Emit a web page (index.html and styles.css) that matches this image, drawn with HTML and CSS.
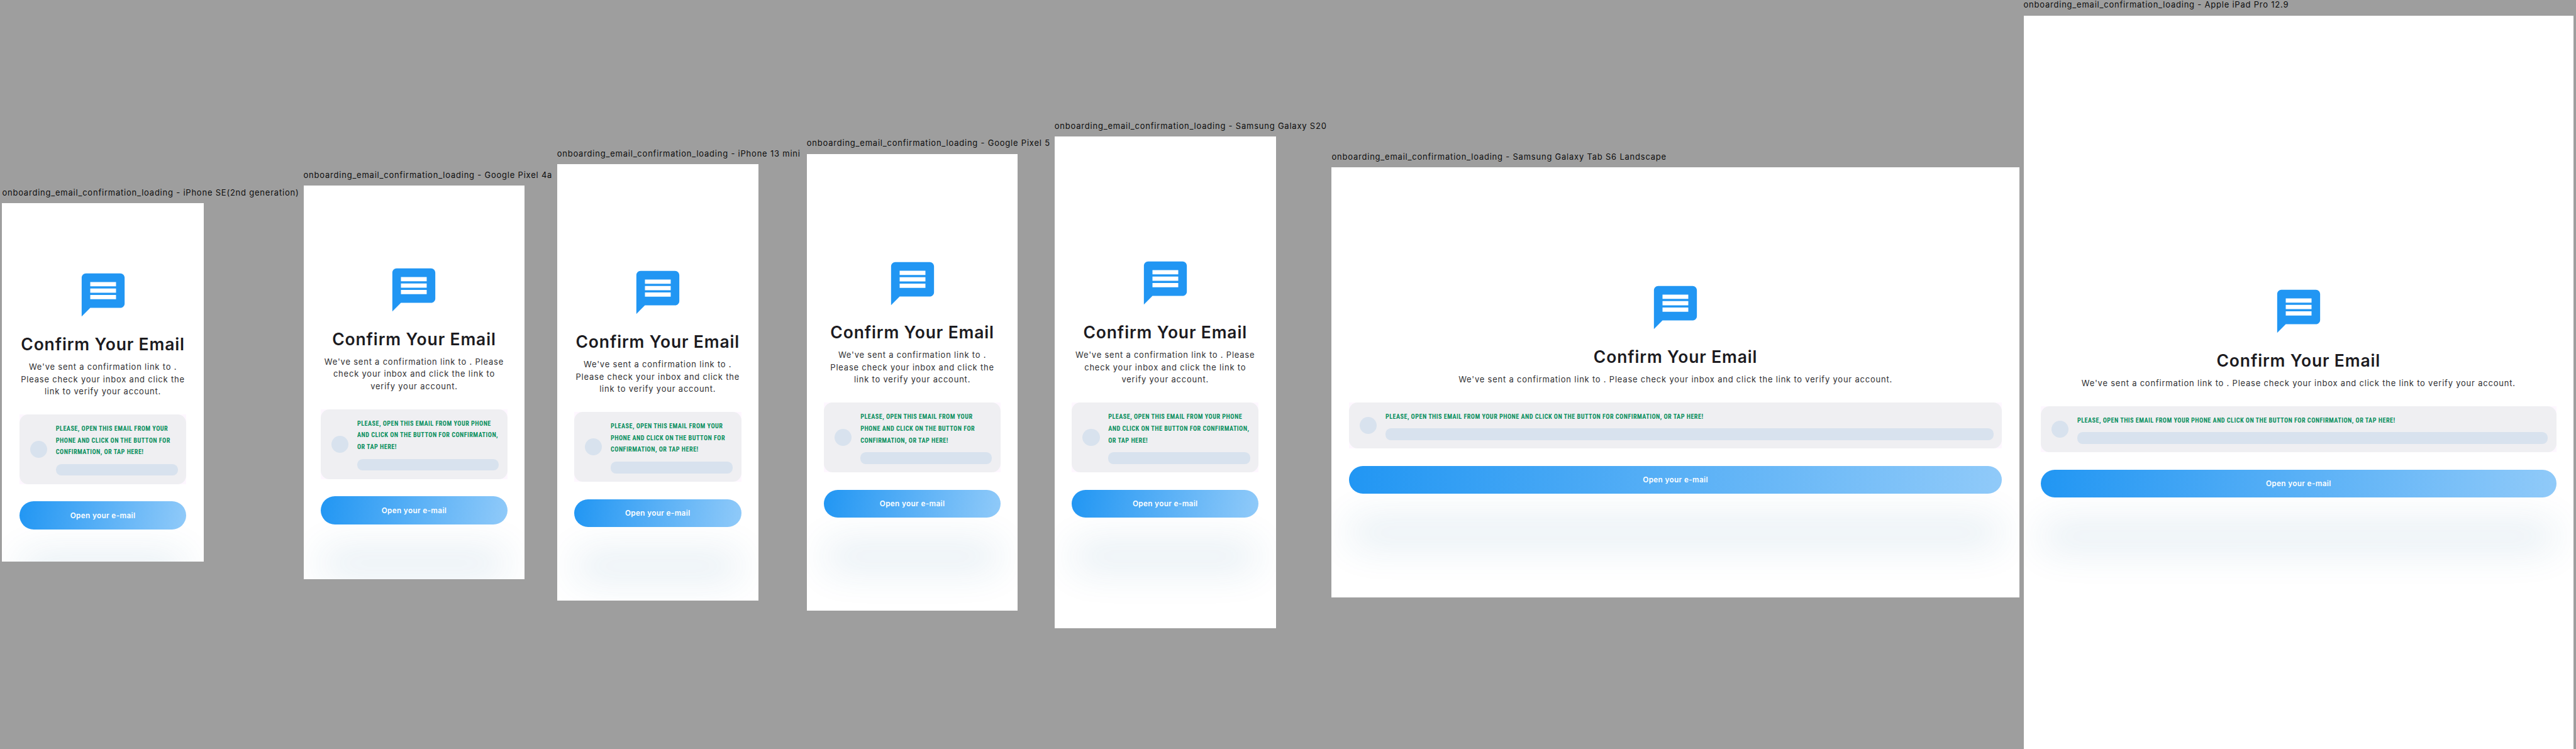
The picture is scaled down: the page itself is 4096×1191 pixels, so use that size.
FILE: index.html
```html
<!DOCTYPE html>
<html lang="en">
<head>
<meta charset="utf-8">
<title>onboarding_email_confirmation_loading</title>
<link rel="stylesheet" href="styles.css">
</head>
<body>
<svg class="defs" aria-hidden="true">
  <symbol id="message" viewBox="0 0 24 24"><path d="M20 2H4c-1.1 0-1.99.9-1.99 2L2 22l4-4h14c1.1 0 2-.9 2-2V4c0-1.1-.9-2-2-2zm-2 12H6v-2h12v2zm0-3H6V9h12v2zm0-3H6V6h12v2z"/></symbol>
</svg>
<main class="board">
  <section class="device se">
    <div class="label">onboarding_email_confirmation_loading - iPhone SE(2nd generation)</div>
    <div class="screen">
      <svg class="icon"><use href="#message"/></svg>
      <h1 class="title">Confirm Your Email</h1>
      <p class="body">We've sent a confirmation link to .<br>Please check your inbox and click the<br>link to verify your account.</p>
      <div class="card-wrap"><div class="card">
        <div class="avatar"></div>
        <div class="card-main">
          <p class="notice">PLEASE, OPEN THIS EMAIL FROM YOUR<br>PHONE AND CLICK ON THE BUTTON FOR<br>CONFIRMATION, OR TAP HERE!</p>
          <div class="bar"></div>
        </div>
      </div></div>
      <div class="button">Open your e-mail</div>
    </div>
  </section>
  <section class="device pixel4a">
    <div class="label">onboarding_email_confirmation_loading - Google Pixel 4a</div>
    <div class="screen">
      <svg class="icon"><use href="#message"/></svg>
      <h1 class="title">Confirm Your Email</h1>
      <p class="body">We've sent a confirmation link to . Please<br>check your inbox and click the link to<br>verify your account.</p>
      <div class="card-wrap"><div class="card">
        <div class="avatar"></div>
        <div class="card-main">
          <p class="notice">PLEASE, OPEN THIS EMAIL FROM YOUR PHONE<br>AND CLICK ON THE BUTTON FOR CONFIRMATION,<br>OR TAP HERE!</p>
          <div class="bar"></div>
        </div>
      </div></div>
      <div class="button">Open your e-mail</div>
    </div>
  </section>
  <section class="device mini">
    <div class="label">onboarding_email_confirmation_loading - iPhone 13 mini</div>
    <div class="screen">
      <svg class="icon"><use href="#message"/></svg>
      <h1 class="title">Confirm Your Email</h1>
      <p class="body">We've sent a confirmation link to .<br>Please check your inbox and click the<br>link to verify your account.</p>
      <div class="card-wrap"><div class="card">
        <div class="avatar"></div>
        <div class="card-main">
          <p class="notice">PLEASE, OPEN THIS EMAIL FROM YOUR<br>PHONE AND CLICK ON THE BUTTON FOR<br>CONFIRMATION, OR TAP HERE!</p>
          <div class="bar"></div>
        </div>
      </div></div>
      <div class="button">Open your e-mail</div>
    </div>
  </section>
  <section class="device pixel5">
    <div class="label">onboarding_email_confirmation_loading - Google Pixel 5</div>
    <div class="screen">
      <svg class="icon"><use href="#message"/></svg>
      <h1 class="title">Confirm Your Email</h1>
      <p class="body">We've sent a confirmation link to .<br>Please check your inbox and click the<br>link to verify your account.</p>
      <div class="card-wrap"><div class="card">
        <div class="avatar"></div>
        <div class="card-main">
          <p class="notice">PLEASE, OPEN THIS EMAIL FROM YOUR<br>PHONE AND CLICK ON THE BUTTON FOR<br>CONFIRMATION, OR TAP HERE!</p>
          <div class="bar"></div>
        </div>
      </div></div>
      <div class="button">Open your e-mail</div>
    </div>
  </section>
  <section class="device s20">
    <div class="label">onboarding_email_confirmation_loading - Samsung Galaxy S20</div>
    <div class="screen">
      <svg class="icon"><use href="#message"/></svg>
      <h1 class="title">Confirm Your Email</h1>
      <p class="body">We've sent a confirmation link to . Please<br>check your inbox and click the link to<br>verify your account.</p>
      <div class="card-wrap"><div class="card">
        <div class="avatar"></div>
        <div class="card-main">
          <p class="notice">PLEASE, OPEN THIS EMAIL FROM YOUR PHONE<br>AND CLICK ON THE BUTTON FOR CONFIRMATION,<br>OR TAP HERE!</p>
          <div class="bar"></div>
        </div>
      </div></div>
      <div class="button">Open your e-mail</div>
    </div>
  </section>
  <section class="device tabs6">
    <div class="label">onboarding_email_confirmation_loading - Samsung Galaxy Tab S6 Landscape</div>
    <div class="screen">
      <svg class="icon"><use href="#message"/></svg>
      <h1 class="title">Confirm Your Email</h1>
      <p class="body">We've sent a confirmation link to . Please check your inbox and click the link to verify your account.</p>
      <div class="card-wrap"><div class="card">
        <div class="avatar"></div>
        <div class="card-main">
          <p class="notice">PLEASE, OPEN THIS EMAIL FROM YOUR PHONE AND CLICK ON THE BUTTON FOR CONFIRMATION, OR TAP HERE!</p>
          <div class="bar"></div>
        </div>
      </div></div>
      <div class="button">Open your e-mail</div>
    </div>
  </section>
  <section class="device ipad">
    <div class="label">onboarding_email_confirmation_loading - Apple iPad Pro 12.9</div>
    <div class="screen">
      <svg class="icon"><use href="#message"/></svg>
      <h1 class="title">Confirm Your Email</h1>
      <p class="body">We've sent a confirmation link to . Please check your inbox and click the link to verify your account.</p>
      <div class="card-wrap"><div class="card">
        <div class="avatar"></div>
        <div class="card-main">
          <p class="notice">PLEASE, OPEN THIS EMAIL FROM YOUR PHONE AND CLICK ON THE BUTTON FOR CONFIRMATION, OR TAP HERE!</p>
          <div class="bar"></div>
        </div>
      </div></div>
      <div class="button">Open your e-mail</div>
    </div>
  </section>
</main>
</body>
</html>
```
FILE: styles.css
```css
/* 1rem is ten logical pixels of a device screen */
html { font-size: 8.5405px; }
* { box-sizing: border-box; }
body {
  margin: 0;
  background: #9e9e9e;
  color: #1c1b1f;
  font-family: Inter, "Open Sans", sans-serif;
  overflow: hidden;
}
.defs { display: none; }

.board {
  display: grid;
  grid-template-columns: 56.1rem 47.2rem 46.5rem 46.14rem 51.6rem 128.8rem 103.26rem;
  align-items: center;
  height: 1191px;
}
.device { padding: 0.4rem 0 0 0.4rem; }
.label {
  height: 2.5rem;
  font-size: 1.52rem;
  line-height: 1.14rem;
  letter-spacing: 0.093rem;
  white-space: nowrap;
  color: #0c0c0c;
}
.screen {
  display: flex;
  flex-direction: column;
  align-items: center;
  padding-left: 3.2rem;
  padding-right: 3.2rem;
  background: #fff;
  overflow: hidden;
}
.se .screen { width: 37.5rem; height: 66.7rem; padding-top: 12.3rem; }
.pixel4a .screen { width: 41.2rem; height: 73.2rem; padding-top: 14.6rem; }
.mini .screen { width: 37.5rem; height: 81.2rem; padding-top: 19.1rem; }
.pixel5 .screen { width: 39.3rem; height: 85.1rem; padding-top: 19.3rem; }
.s20 .screen { width: 41.2rem; height: 91.5rem; padding-top: 22.5rem; }
.tabs6 .screen { width: 128rem; height: 80rem; padding-top: 21.3rem; }
.ipad .screen { width: 102.4rem; height: 136.6rem; padding-top: 50.3rem; }

.icon { flex: none; width: 9.6rem; height: 9.6rem; fill: #2196f3; }
.title {
  margin: 2.46rem 0 0;
  font-size: 3.1rem;
  font-weight: 600;
  line-height: 3.8rem;
  letter-spacing: 0.1rem;
  white-space: nowrap;
}
.body {
  margin: 1.2rem 0 0;
  font-size: 1.52rem;
  line-height: 2.3rem;
  letter-spacing: 0.093rem;
  text-align: center;
  white-space: nowrap;
  color: #2f2f32;
}
.card-wrap { align-self: stretch; margin-top: 3.07rem; background: #fef7ff; }
.card {
  display: flex;
  align-items: center;
  gap: 1.6rem;
  padding: 1.6rem 1.6rem 1.6rem 2rem;
  border-radius: 1.6rem;
  background: #efeff2;
}
.avatar { flex: none; width: 3.2rem; height: 3.2rem; border-radius: 50%; background: #d8e2ee; }
.card-main { flex: 1; display: flex; flex-direction: column; gap: 1rem; }
.notice {
  margin: 0;
  font-family: "Roboto Condensed", Roboto, sans-serif;
  font-size: 1.2rem;
  font-weight: 700;
  line-height: 2.2rem;
  letter-spacing: 0.051rem;
  white-space: nowrap;
  color: #0b8f60;
}
.bar { height: 2.2rem; border-radius: 1rem; background: #d8e2ee; }
.button {
  flex: none;
  align-self: stretch;
  height: 5.25rem;
  margin-top: 3.2rem;
  padding-top: 0.2rem;
  border-radius: 2.7rem;
  background: linear-gradient(99.5deg, #2196f3, #90caf9);
  box-shadow: 0 9.8rem 7rem rgba(35, 110, 155, 0.12);
  color: #fff;
  font-size: 1.38rem;
  font-weight: 600;
  line-height: 5.05rem;
  letter-spacing: 0.04rem;
  text-align: center;
}
.tabs6 .button, .ipad .button { background: linear-gradient(92.8deg, #2196f3, #90caf9); }
```
